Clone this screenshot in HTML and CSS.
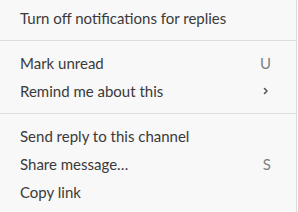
FILE: index.html
```html
<!DOCTYPE html>
<html>
<head>
<meta charset="utf-8">
<link rel="stylesheet" href="styles.css">
</head>
<body>
<div class="menu">
  <div class="section first">
    <div class="item"><span class="label">Turn off notifications for replies</span></div>
  </div>
  <div class="section">
    <div class="item"><span class="label">Mark unread</span><span class="key">U</span></div>
    <div class="item"><span class="label">Remind me about this</span>
      <svg class="chev" width="8" height="8" viewBox="0 0 8 8"><path d="M2.5 1.5 L5 4 L2.5 6.5" fill="none" stroke="#555" stroke-width="1.6" stroke-linecap="round" stroke-linejoin="round"/></svg>
    </div>
  </div>
  <div class="section">
    <div class="item"><span class="label">Send reply to this channel</span></div>
    <div class="item"><span class="label">Share message…</span><span class="key">S</span></div>
    <div class="item"><span class="label">Copy link</span></div>
  </div>
</div>
</body>
</html>
```

FILE: styles.css
```css
html, body {
  margin: 0;
  padding: 0;
  background: #ffffff;
  height: 212px;
  overflow: hidden;
}
.menu {
  width: 296px;
  height: 212px;
  background: #f8f8f8;
  border-right: 1px solid #dcdcdc;
  font-family: Lato, "Noto Sans", sans-serif;
  font-size: 15px;
  color: #3a3a3a;
}
.section {
  padding: 8px 0;
  border-top: 1px solid #dcdcdc;
}
.section.first {
  border-top: none;
  padding-top: 4px;
}
.item {
  display: flex;
  align-items: center;
  justify-content: space-between;
  height: 28px;
  line-height: 28px;
  padding: 0 29px 0 20px;
}
.key {
  color: #808080;
  font-size: 15px;
  margin-right: -4px;
}
.chev {
  display: block;
  margin-right: -3px;
}
```
